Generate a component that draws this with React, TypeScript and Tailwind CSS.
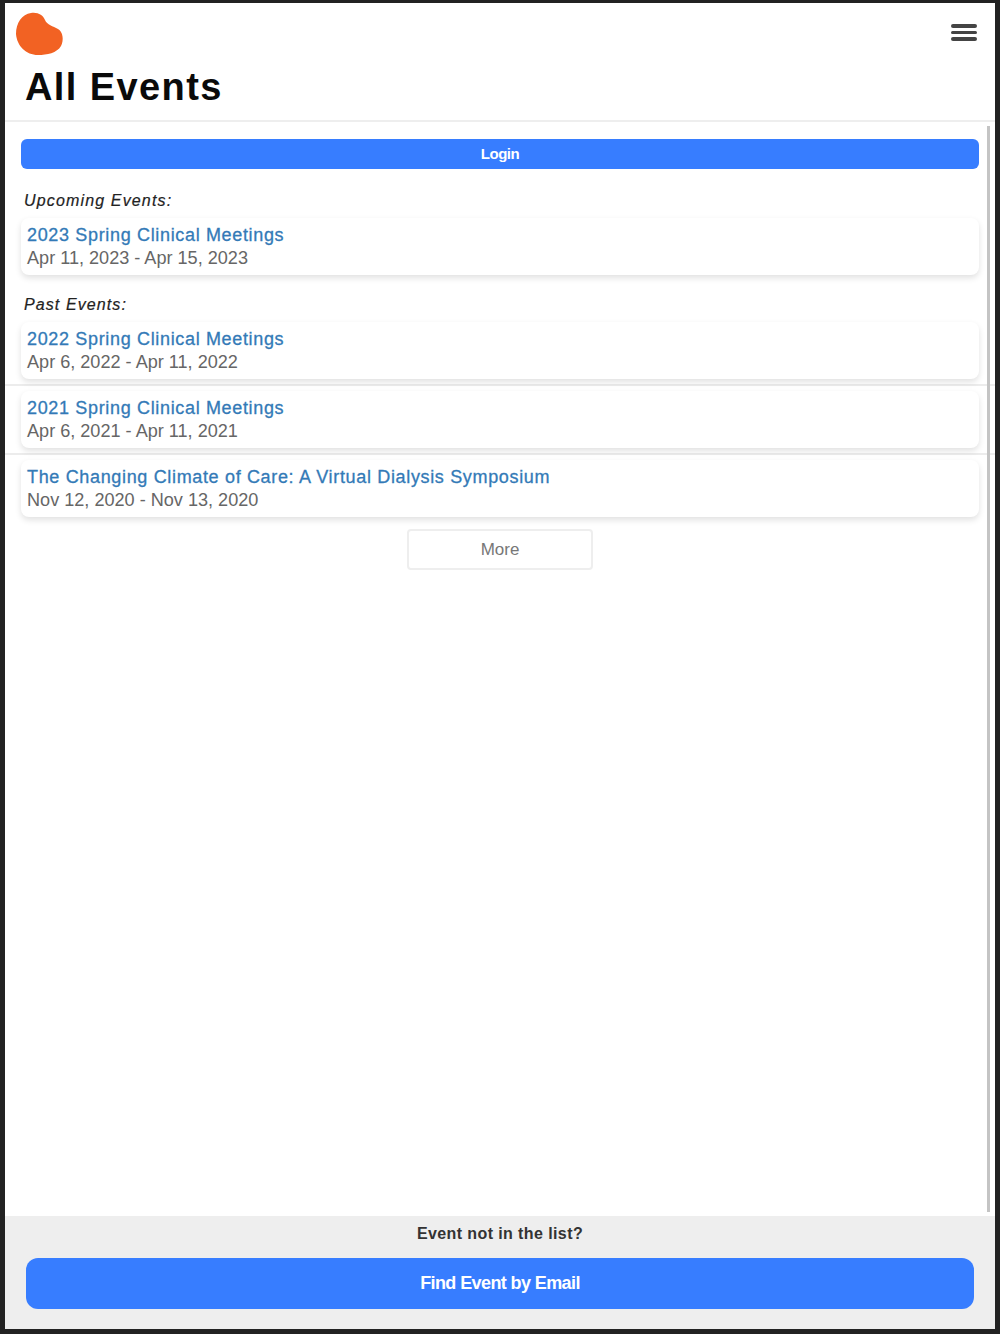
const upcoming = [
    { title: '2023 Spring Clinical Meetings', dates: 'Apr 11, 2023 - Apr 15, 2023' },
];

const past = [
    { title: '2022 Spring Clinical Meetings', dates: 'Apr 6, 2022 - Apr 11, 2022' },
    { title: '2021 Spring Clinical Meetings', dates: 'Apr 6, 2021 - Apr 11, 2021' },
    { title: 'The Changing Climate of Care: A Virtual Dialysis Symposium', dates: 'Nov 12, 2020 - Nov 13, 2020' },
];

const EventCard = ({ title, dates }: { title: string; dates: string }) => (
    <div className="h-[69px] py-[5px] border-b-2 border-[#ececec] last:border-transparent">
        <div className="mx-[16px] h-[57px] rounded-lg bg-white pl-[6px] pt-[6px] shadow-[0_3px_6px_rgba(0,0,0,0.12)]">
            <p className="text-[18px] leading-[23px] tracking-[0.66px] [-webkit-text-stroke:0.3px_#337ab7] text-[#337ab7]">{title}</p>
            <p className="text-[18.1px] leading-[23px] text-[#666]">{dates}</p>
        </div>
    </div>
);

const App = () => (
    <div className="h-[1334px] bg-[#222] pt-[3px] px-[5px] pb-[5px] font-['Liberation_Sans',Arial,sans-serif]">
        <div className="h-full flex flex-col bg-white">
            <header className="relative h-[119px] shrink-0 border-b-2 border-[#eee]">
                <svg className="absolute left-[11px] top-[9px]" width="48" height="44" viewBox="0 0 48 44">
                    <path
                        d="M15 1C22 0 27 3 29 8C31 13 37 14 42 17C47 20 48 28 45 34C41 41 31 43 22 43C10 43 1 34 0 22C0 11 6 2 15 1Z"
                        fill="#f26223"
                    />
                </svg>
                <h1 className="absolute left-[20px] top-[61px] text-[38px] leading-[46px] font-bold tracking-[1.4px] text-[#0a0a0a]">All Events</h1>
                <div className="absolute left-[946px] top-[21px] w-[26px] flex flex-col gap-[3px]">
                    <span className="h-[3.5px] rounded-sm bg-[#444]" />
                    <span className="h-[3.5px] rounded-sm bg-[#444]" />
                    <span className="h-[3.5px] rounded-sm bg-[#444]" />
                </div>
            </header>

            <main className="relative flex-1 min-h-0 overflow-hidden">
                <div className="absolute right-[5px] top-[4px] h-[1086px] w-[3px] bg-[#c4c4c4]" />
                <div className="px-[16px] pt-[17px]">
                    <button className="w-full h-[30px] rounded-md bg-[#377dff] text-white text-[15px] font-bold tracking-[-0.5px]">
                        Login
                    </button>
                </div>

                <p className="mt-[23px] pl-[19px] text-[16px] leading-[18px] italic tracking-[1.15px] [-webkit-text-stroke:0.2px_#222] text-[#222]">Upcoming Events:</p>
                <div className="mt-[3px]">
                    {upcoming.map(e => <EventCard key={e.title} {...e} />)}
                </div>

                <p className="mt-[14px] pl-[19px] text-[16px] leading-[18px] italic tracking-[1.1px] [-webkit-text-stroke:0.2px_#222] text-[#222]">Past Events:</p>
                <div className="mt-[3px]">
                    {past.map(e => <EventCard key={e.title} {...e} />)}
                </div>

                <div className="mt-[5px] flex justify-center">
                    <button className="w-[186px] h-[41px] rounded border-2 border-[#eee] bg-white text-[17px] text-[#777]">
                        More
                    </button>
                </div>
            </main>

            <footer className="h-[113px] shrink-0 bg-[#eee] px-[21px] pt-[8px]">
                <p className="text-center text-[16px] leading-[19px] font-bold tracking-[0.4px] text-[#333]">Event not in the list?</p>
                <button className="mt-[15px] w-full h-[51px] rounded-xl bg-[#377dff] text-white text-[18px] font-bold tracking-[-0.6px]">
                    Find Event by Email
                </button>
            </footer>
        </div>
    </div>
);

export default App;
